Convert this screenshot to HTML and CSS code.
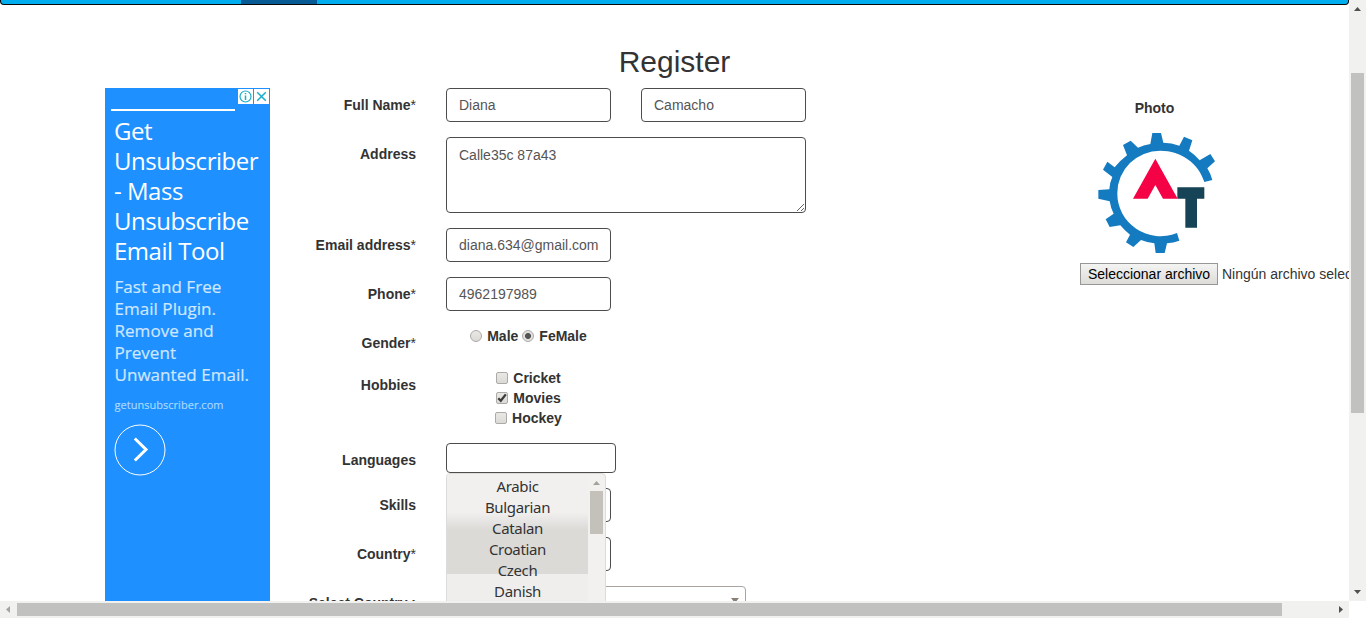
FILE: index.html
```html
<!DOCTYPE html>
<html lang="es">
<head>
<meta charset="utf-8">
<title>Register</title>
<link rel="stylesheet" href="styles.css">
</head>
<body>
<div class="window">
  <div class="page">
    <nav class="navbar"><span class="navbar-active"></span></nav>
    <h2 class="title">Register</h2>
    <div class="columns">
      <aside class="ad">
        <div class="ad-badges">
          <svg width="15" height="15" viewBox="0 0 15 15"><rect width="15" height="15" fill="#fff"/><circle cx="7.5" cy="7.5" r="5.5" fill="none" stroke="#18aecb" stroke-width="1.2"/><path d="M7.5 6.5V11M7.5 4v1.3" stroke="#18aecb" stroke-width="1.5"/></svg>
          <svg width="15" height="15" viewBox="0 0 15 15"><rect width="15" height="15" fill="#fff"/><path d="M3.2 3.2l8.6 8.6M11.8 3.2l-8.6 8.6" stroke="#18aecb" stroke-width="1.5"/></svg>
        </div>
        <div class="ad-rule"></div>
        <div class="ad-title">Get<br>Unsubscriber<br>- Mass<br>Unsubscribe<br>Email Tool</div>
        <div class="ad-text">Fast and Free<br>Email Plugin.<br>Remove and<br>Prevent<br>Unwanted Email.</div>
        <div class="ad-url">getunsubscriber.com</div>
        <svg class="ad-arrow" width="52" height="52" viewBox="0 0 52 52"><circle cx="26" cy="26" r="25" fill="none" stroke="#fff"/><path d="M20.8 14.500L32 25.500 20.800 36.500" fill="none" stroke="#fff" stroke-width="3"/></svg>
      </aside>
      <form class="form">
        <div class="row"><label class="label">Full Name<span class="star">*</span></label><div class="pair"><input class="control" value="Diana"><input class="control" value="Camacho"></div></div>
        <div class="row"><label class="label">Address</label><textarea class="control area">Calle35c 87a43</textarea></div>
        <div class="row"><label class="label">Email address<span class="star">*</span></label><input class="control" value="diana.634@gmail.com"></div>
        <div class="row"><label class="label">Phone<span class="star">*</span></label><input class="control" value="4962197989"></div>
        <div class="row"><label class="label">Gender<span class="star">*</span></label>
          <div class="options gender"><div class="option"><i class="radio"></i>Male</div><div class="option"><i class="radio checked"></i>FeMale</div></div>
        </div>
        <div class="row"><label class="label">Hobbies</label>
          <div class="options hobbies">
            <div class="option"><i class="check"></i>Cricket</div>
            <div class="option"><i class="check"><svg width="10" height="10" viewBox="0 0 10 10"><path d="M1.3 5.3l2.5 2.5L8.8 1.4" fill="none" stroke="#3c3c3c" stroke-width="2.3"/></svg></i>Movies</div>
            <div class="option"><i class="check"></i>Hockey</div>
          </div>
        </div>
        <div class="row"><label class="label">Languages</label>
          <div class="multi">
            <div class="menu">
              <ul class="menu-list"><li>Arabic</li><li>Bulgarian</li><li>Catalan</li><li>Croatian</li><li>Czech</li><li>Danish</li></ul>
              <div class="menu-bar"><svg width="9" height="6" viewBox="0 0 9 6"><path d="M1 5h7L4.500 1z" fill="#a3a19c"/></svg><div class="menu-thumb"></div></div>
            </div>
          </div>
        </div>
        <div class="row"><label class="label">Skills</label><div class="control"></div></div>
        <div class="row"><label class="label">Country<span class="star">*</span></label><div class="control"></div></div>
        <div class="row"><label class="label">Select Country :</label><div class="select2"><svg width="8" height="5" viewBox="0 0 8 5"><path d="M0 0h8L4 5z" fill="#888077"/></svg></div></div>
      </form>
      <section class="photo">
        <div class="photo-label">Photo</div>
        <svg class="logo" width="120" height="122" viewBox="84 126 360 366">
          <path fill="#157bc0" d="M403 276L427 270Q422 251 412 235L435 214L421 192L389 211Q375 194 357 182L367 151L342 140L328 167Q305 158 280 158L273 129H247L241 162Q220 166 204 173L182 152L159 165L171 196Q150 212 134 232L112 215L99 239L127 261Q119 278 118 298L85 300V326L119 334Q122 354 131 371L107 388L119 411L151 406Q164 422 180 434L168 457L190 471L213 450Q233 458 253 460L257 489H284L291 460Q310 458 328 452L321 429A130 127 0 0 1 142 309A129 127 0 0 1 271 182C333 182 386 220 403 276Z"/>
          <path d="M256 206L323 326H279L256 285L233 326H189Z" fill="#f50246"/>
          <path d="M322 292H403V326H381V413H346V326H322Z" fill="#164356"/>
        </svg>
        <div class="file"><span class="file-button">Seleccionar archivo</span><span>Ningún archivo seleccionado</span></div>
      </section>
    </div>
  </div>
  <div class="vbar"><svg class="up" width="17" height="17" viewBox="0 0 17 17"><path d="M5 11h7L8.500 7z" fill="#505050"/></svg><div class="vthumb"></div><svg class="down" width="17" height="17" viewBox="0 0 17 17"><path d="M5 6h7L8.500 10z" fill="#505050"/></svg></div>
  <div class="hbar"><svg width="17" height="17" viewBox="0 0 17 17"><path d="M10 5v7L6 8.500z" fill="#a3a3a3"/></svg><div class="hthumb"></div><svg class="right" width="17" height="17" viewBox="0 0 17 17"><path d="M7 5v7L11 8.500z" fill="#505050"/></svg></div>
  <div class="corner"></div>
</div>
</body>
</html>
```
FILE: styles.css
```css
* { box-sizing: border-box; }
body { margin: 0; background: #fff; color: #333; font: 14px/20px "Liberation Sans", Arial, sans-serif; overflow: hidden; }
svg { display: block; }
.window { display: grid; grid-template: 601px 17px / 1349px 17px; }
.page { overflow: hidden; }
.navbar { height: 5px; background: #00aeef; border: 1px solid #080808; border-top: 0; border-radius: 0 0 4px 4px; padding-left: 240px; }
.navbar-active { display: block; width: 76px; height: 4px; background: #085a94; }
.title { margin: 40px 0 10px; font-size: 30px; font-weight: 400; line-height: 33px; text-align: center; }
.columns { display: grid; grid-template-columns: 165px 536px 1fr; padding-left: 105px; }

.ad { height: 600px; background: #1e90ff; color: #fff; font-family: "Open Sans", sans-serif; padding: 1px 1px 0 6px; }
.ad-badges { display: flex; justify-content: flex-end; gap: 1px; }
.ad-rule { width: 124px; height: 2px; margin-top: 5px; background: #fff; }
.ad-title { margin: 5px 0 0 3px; font-size: 24px; line-height: 30px; letter-spacing: -0.48px; white-space: nowrap; }
.ad-text { margin: 10px 0 0 3.500px; font-size: 17px; line-height: 22px; letter-spacing: 0.04px; color: #cfe7ff; -webkit-text-stroke: 0.2px #cfe7ff; white-space: nowrap; }
.ad-url { margin: 11px 0 0 3.500px; font-size: 11px; line-height: 16px; letter-spacing: 0.03px; color: #addaff; -webkit-text-stroke: 0.15px #addaff; }
.ad-arrow { margin: 11px 0 0 2.500px; }

.form { display: flex; flex-direction: column; gap: 15px; }
.row { display: grid; grid-template-columns: 146px 360px; column-gap: 30px; align-items: start; }
.label { padding-top: 7px; text-align: right; font-weight: 700; white-space: nowrap; }
.star { font-weight: 400; }
.pair { display: flex; gap: 30px; }
.control { width: 165px; height: 34px; padding: 6px 12px; border: 1px solid #4d4d4d; border-radius: 4px; background: #fff; color: #555; font: inherit; outline: 0; }
.area { display: block; width: 360px; height: 76px; padding-top: 7px; }
.options { display: flex; width: 165px; font-weight: 700; }
.option { display: flex; align-items: center; gap: 5px; }
.gender { justify-content: center; gap: 4px; }
.hobbies { flex-direction: column; align-items: center; }
.radio, .check { width: 12px; height: 12px; border: 1px solid #adaba8; background: linear-gradient(#e9e8e6, #dcdad7); }
.radio { border-radius: 50%; }
.radio.checked { background: radial-gradient(circle, #555 2.6px, #e2e0dd 3.4px); }
.check { border-radius: 2px; }
.multi { position: relative; width: 170px; height: 30px; border: 1px solid #4d4d4d; border-radius: 4px; }
.menu { position: absolute; z-index: 1; top: 29px; left: -1px; width: 160px; height: 200px; display: flex; border: 1px solid #dddcda; border-radius: 4px; background: #f2f1f0; overflow: hidden; }
.menu-list { width: 141px; margin: 0; padding: 2px 0 0; list-style: none; text-align: center; font: 15px/21px "Noto Sans", sans-serif; letter-spacing: -0.35px; background: linear-gradient(#f1f0ef 38px, #dbdad7 56px, #dbdad7 100px, #efeeed 100px); }
.menu-bar { width: 16px; display: flex; flex-direction: column; align-items: center; gap: 5px; padding: 6px 0 0 1px; }
.menu-thumb { width: 13px; height: 43px; background: #c3c1ba; }
.select2 { display: flex; justify-content: flex-end; width: 300px; height: 28px; padding: 11px 6px 0 0; border: 1px solid #aaa39e; border-radius: 4px; }

.photo { padding: 10px 0 0 274px; }
.photo-label { width: 149px; text-align: center; font-weight: 700; }
.logo { margin: 14px 0 0 18px; }
.file { display: flex; align-items: center; gap: 4px; margin-top: 9px; white-space: nowrap; }
.file-button { flex: none; width: 138px; height: 22px; line-height: 20px; text-align: center; color: #000; border: 1px solid #979797; background: linear-gradient(#f4f4f3, #dddcd8); }

.vbar, .hbar { background: #f1f1f0; display: flex; }
.vbar { flex-direction: column; align-items: center; }
.hbar { align-items: center; }
.corner { background: #fff; }
.vthumb { width: 13px; height: 340px; margin-top: 56px; background: #c1c1bf; }
.hthumb { width: 1265px; height: 13px; background: #c1c1bf; }
.down { margin-top: auto; }
.right { margin-left: auto; }
```
